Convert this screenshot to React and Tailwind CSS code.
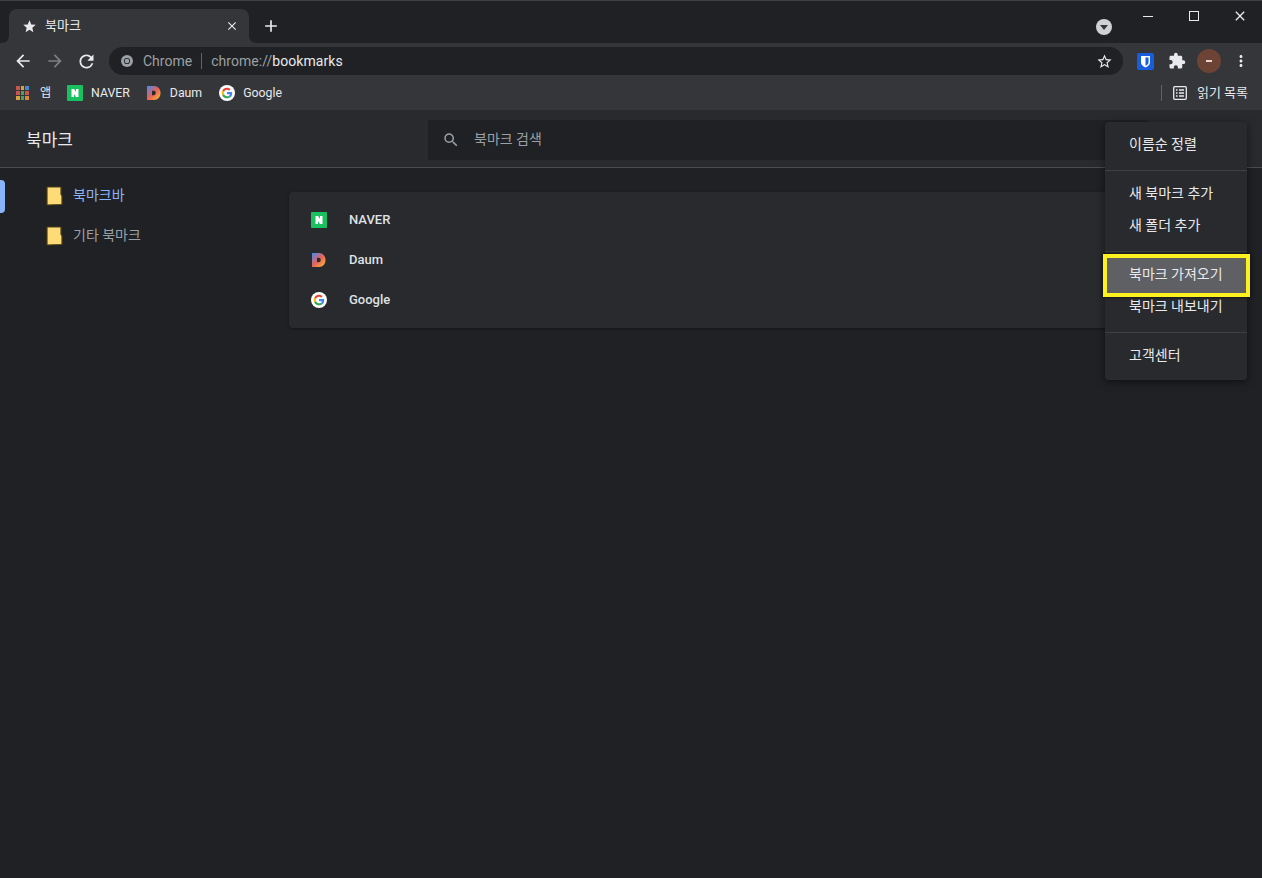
import { MdArrowBack, MdArrowForward, MdRefresh, MdStar, MdStarBorder, MdClose, MdAdd, MdSearch, MdExtension, MdMoreVert } from "react-icons/md";

const font = "font-['Roboto','Noto_Sans_CJK_KR',sans-serif]";

const NaverIcon = ({ size = 16 }) => (
  <svg width={size} height={size} viewBox="0 0 16 16">
    <rect width="16" height="16" rx="1" fill="#19c060" />
    <path d="M4.5 4h2.6l1.9 3V4h2.5v8H8.9L7 9v3H4.5z" fill="#fff" />
  </svg>
);

const DaumIcon = ({ id, size = 16 }) => (
  <svg width={size} height={size} viewBox="0 0 16 16">
    <defs>
      <linearGradient id={id} x1="0" y1="0" x2="1" y2="1">
        <stop offset="0" stopColor="#3f8cf5" />
        <stop offset="0.5" stopColor="#e8625a" />
        <stop offset="1" stopColor="#fbc02d" />
      </linearGradient>
    </defs>
    <path d="M1 1h7c3.800 0 6.500 2.900 6.500 7s-2.700 7-6.500 7H1z" fill={`url(#${id})`} />
    <path d="M6 5.800h1.500c1.400 0 2.200.9 2.200 2.200s-.8 2.200-2.200 2.200H6z" fill="#2a2a2e" />
  </svg>
);

const GoogleIcon = ({ size = 16 }) => (
  <svg width={size} height={size} viewBox="0 0 48 48">
    <circle cx="24" cy="24" r="24" fill="#fff" />
    <path fill="#ea4335" d="M24 14.5c2.6 0 4.6.9 6.2 2.4l4.6-4.6C32 9.700 28.300 8 24 8c-6.300 0-11.700 3.600-14.300 8.900l5.400 4.200C16.300 17.200 19.800 14.500 24 14.500z" />
    <path fill="#4285f4" d="M39.600 24.400c0-1.200-.1-2.300-.3-3.400H24v6.400h8.800c-.4 2-1.500 3.800-3.300 5l5.200 4c3-2.800 4.900-7 4.900-12z" />
    <path fill="#fbbc05" d="M15.100 26.900c-.3-.9-.5-1.900-.5-2.900s.2-2 .5-2.900l-5.400-4.200C8.600 19 8 21.400 8 24s.6 5 1.700 7.100z" />
    <path fill="#34a853" d="M24 40c4.300 0 8-1.400 10.700-3.900l-5.200-4c-1.400 1-3.300 1.600-5.500 1.600-4.200 0-7.700-2.700-8.900-6.600l-5.400 4.200C12.300 36.400 17.700 40 24 40z" />
  </svg>
);

const ChromeIcon = () => (
  <svg width="12" height="12" viewBox="0 0 12 12">
    <circle cx="6" cy="6" r="6" fill="#9aa0a6" />
    <circle cx="6" cy="6" r="3.100" fill="#202124" />
    <circle cx="6" cy="6" r="2.300" fill="#9aa0a6" />
  </svg>
);

const AppsIcon = () => {
  const colors = ["#c9564c", "#d9a33c", "#4a86c9", "#c9564c", "#4f9f55", "#c9564c", "#d9a33c", "#4f9f55", "#d98a3a"];
  return (
    <div className="grid grid-cols-3 gap-[1px] w-[13px] h-[14px]">
      {colors.map((c, i) => (
        <span key={i} className="block w-[3.500px] h-[4px]" style={{ backgroundColor: c }} />
      ))}
    </div>
  );
};

const FolderIcon = () => (
  <svg width="17" height="20" viewBox="0 0 17 20">
    <path d="M1 1h14v7l1 2v8.500l-15 .5z" fill="#fddc78" stroke="#4a3c10" strokeWidth="1.200" />
  </svg>
);

const BookmarkChip = ({ icon, label, className }) => (
  <div className={`flex items-center gap-2 ${className}`}>
    {icon}
    <span className="text-[12.300px] text-[#e8eaed]">{label}</span>
  </div>
);

const Row = ({ icon, label }) => (
  <div className="flex items-center h-10 pl-[22px]">
    {icon}
    <span className="ml-[22px] text-[13px] font-medium text-[#dfe1e5]">{label}</span>
  </div>
);

const MenuItem = ({ children }) => (
  <div className="flex items-center h-8 pl-6 pt-px text-[14px] text-[#e8eaed] whitespace-nowrap">{children}</div>
);

const MenuLine = () => <div className="h-px bg-[#3f4043] mt-[10px] mb-[6px]" />;

const App = () => {
  return (
    <div className={`${font} relative w-[1262px] h-[878px] overflow-hidden bg-[#202124] flex flex-col`}>
      {/* tab strip */}
      <div className="h-[43px] bg-[#202124] border-t border-[#3f4043] flex items-end pl-[9px] relative">
        <div className="relative w-[240px] h-[34px] bg-[#35363a] rounded-t-lg flex items-center pl-[13px] pr-[10px]">
          <MdStar size={15} className="text-[#e8eaed]" />
          <span className="ml-[8px] text-[13px] text-[#e8eaed]">북마크</span>
          <MdClose size={14} className="ml-auto text-[#e8eaed]" />
          <svg className="absolute -right-[8px] bottom-0" width="8" height="8" viewBox="0 0 8 8">
            <path d="M0 0c0 5 3 8 8 8H0z" fill="#35363a" />
          </svg>
          <svg className="absolute -left-[8px] bottom-0" width="8" height="8" viewBox="0 0 8 8">
            <path d="M8 0c0 5-3 8-8 8h8z" fill="#35363a" />
          </svg>
        </div>
        <MdAdd size={20} className="ml-[12px] mb-[7px] text-[#e8eaed]" />
        <div className="absolute left-[1096px] top-[18px] w-[16px] h-[16px] rounded-full bg-[#cfd1d4] flex items-center justify-center">
          <span className="w-0 h-0 border-l-[4px] border-r-[4px] border-t-[5px] border-l-transparent border-r-transparent border-t-[#35363a]" />
        </div>
        {/* window buttons */}
        <div className="absolute -right-px top-0 flex text-[#e8eaed]">
          <div className="w-[46px] h-[30px] flex items-center justify-center">
            <span className="block w-[10px] h-px bg-[#e8eaed]" />
          </div>
          <div className="w-[46px] h-[30px] flex items-center justify-center">
            <span className="block w-[10px] h-[10px] border border-[#e8eaed]" />
          </div>
          <div className="w-[46px] h-[30px] flex items-center justify-center">
            <MdClose size={16} />
          </div>
        </div>
      </div>

      {/* toolbar */}
      <div className="h-[36px] bg-[#35363a] flex items-center pl-[13px]">
        <MdArrowBack size={20} className="text-[#e8eaed]" />
        <MdArrowForward size={20} className="ml-[12px] text-[#7d7f83]" />
        <MdRefresh size={21} className="ml-[11px] text-[#e8eaed]" />
        <div className="ml-[12px] w-[1014px] h-[28px] rounded-full bg-[#202124] flex items-center pl-[12px] pr-[10px]">
          <ChromeIcon />
          <span className="ml-[10px] text-[14px] text-[#9aa0a6]">Chrome</span>
          <span className="mx-[9px] w-px h-[16px] bg-[#5f6368]" />
          <span className="text-[14px] text-[#9aa0a6] tracking-[0.050px]">
            chrome://<span className="text-[#e8eaed]">bookmarks</span>
          </span>
          <MdStarBorder size={17} className="ml-auto text-[#e8eaed]" />
        </div>
        <svg className="ml-[14px]" width="17" height="17" viewBox="0 0 17 17">
          <rect width="17" height="17" rx="2" fill="#175ddc" />
          <path d="M4 3h9v6.500c0 2.500-2.500 4-4.500 5C6.500 13.500 4 12 4 9.500z" fill="#fff" />
          <path d="M8.500 4.500h3v5c0 1.500-1.500 2.500-3 3.300z" fill="#175ddc" />
        </svg>
        <MdExtension size={18} className="ml-[14px] text-[#e8eaed]" />
        <div className="ml-[11px] w-[24px] h-[24px] rounded-full bg-[#6d4336] flex items-center justify-center">
          <span className="block w-[6px] h-[1.500px] bg-[#e8d5cc]" />
        </div>
        <MdMoreVert size={18} className="ml-[11px] text-[#e8eaed]" />
      </div>

      {/* bookmarks bar */}
      <div className="h-[31px] bg-[#35363a] flex items-center pl-[16px] pr-[14px] pb-[3px]">
        <AppsIcon />
        <span className="ml-[11px] mr-[16px] text-[12px] text-[#e8eaed]">앱</span>
        <BookmarkChip icon={<NaverIcon />} label="NAVER" className="mr-[16px]" />
        <BookmarkChip icon={<DaumIcon id="daum-bar" />} label="Daum" className="mr-[17px]" />
        <BookmarkChip icon={<GoogleIcon />} label="Google" />
        <div className="ml-auto flex items-center">
          <span className="w-px h-[16px] bg-[#5f6368] mr-[11px]" />
          <svg width="14" height="14" viewBox="0 0 14 14" fill="none" stroke="#e8eaed" strokeWidth="1.300">
            <rect x="0.700" y="0.700" width="12.600" height="12.600" rx="1" />
            <path d="M3 4h1.500M3 7h1.500M3 10h1.500M6 4h5M6 7h5M6 10h5" />
          </svg>
          <span className="ml-[10px] text-[13px] text-[#e8eaed]">읽기 목록</span>
        </div>
      </div>

      {/* bookmarks header */}
      <div className="h-[58px] bg-[#292a2d] border-b border-[#4b4c4f] flex items-center pl-[26px] pt-[2px]">
        <h1 className="w-[402px] text-[17px] text-[#e8eaed] translate-y-px">북마크</h1>
        <div className="w-[720px] h-[40px] bg-[#202124] flex items-center pl-[14px]">
          <MdSearch size={18} className="text-[#9aa0a6]" />
          <span className="ml-[14px] text-[14px] text-[#9aa0a6]">북마크 검색</span>
        </div>
      </div>

      {/* body */}
      <div className="flex-1 flex">
        <div className="w-[289px] pt-[8px] shrink-0">
          <div className="relative flex items-center h-[40px] pl-[46px]">
            <span className="absolute left-0 top-[4px] w-[5px] h-[33px] rounded-r bg-[#8ab4f8]" />
            <FolderIcon />
            <span className="ml-[10px] text-[14px] text-[#8ab4f8] -translate-y-[1px]">북마크바</span>
          </div>
          <div className="flex items-center h-[40px] pl-[46px]">
            <FolderIcon />
            <span className="ml-[10px] text-[14px] text-[#9aa0a6] -translate-y-[1px]">기타 북마크</span>
          </div>
        </div>
        <div className="pt-[24px] w-[900px]">
          <div className="bg-[#292a2d] rounded py-[8px] shadow-[0_1px_3px_rgba(0,0,0,0.4)]">
            <Row icon={<NaverIcon />} label="NAVER" />
            <Row icon={<DaumIcon id="daum-list" />} label="Daum" />
            <Row icon={<GoogleIcon />} label="Google" />
          </div>
        </div>
      </div>

      {/* dropdown menu */}
      <div className="absolute left-[1105px] top-[122px] w-[142px] h-[258px] bg-[#292a2d] rounded shadow-[0_2px_8px_rgba(0,0,0,0.5)] pt-[6px]">
        <MenuItem>이름순 정렬</MenuItem>
        <MenuLine />
        <MenuItem>새 북마크 추가</MenuItem>
        <MenuItem>새 폴더 추가</MenuItem>
        <MenuLine />
        <div className="relative">
          <div className="absolute -left-[2px] -right-[3px] -top-[4px] h-[43px] bg-[#5f6063] border-4 border-[#fff01f] shadow-[0_0_3px_rgba(0,0,0,0.8)]" />
          <div className="relative">
            <MenuItem>북마크 가져오기</MenuItem>
          </div>
        </div>
        <MenuItem>북마크 내보내기</MenuItem>
        <MenuLine />
        <MenuItem>고객센터</MenuItem>
      </div>
    </div>
  );
};

export default App;
